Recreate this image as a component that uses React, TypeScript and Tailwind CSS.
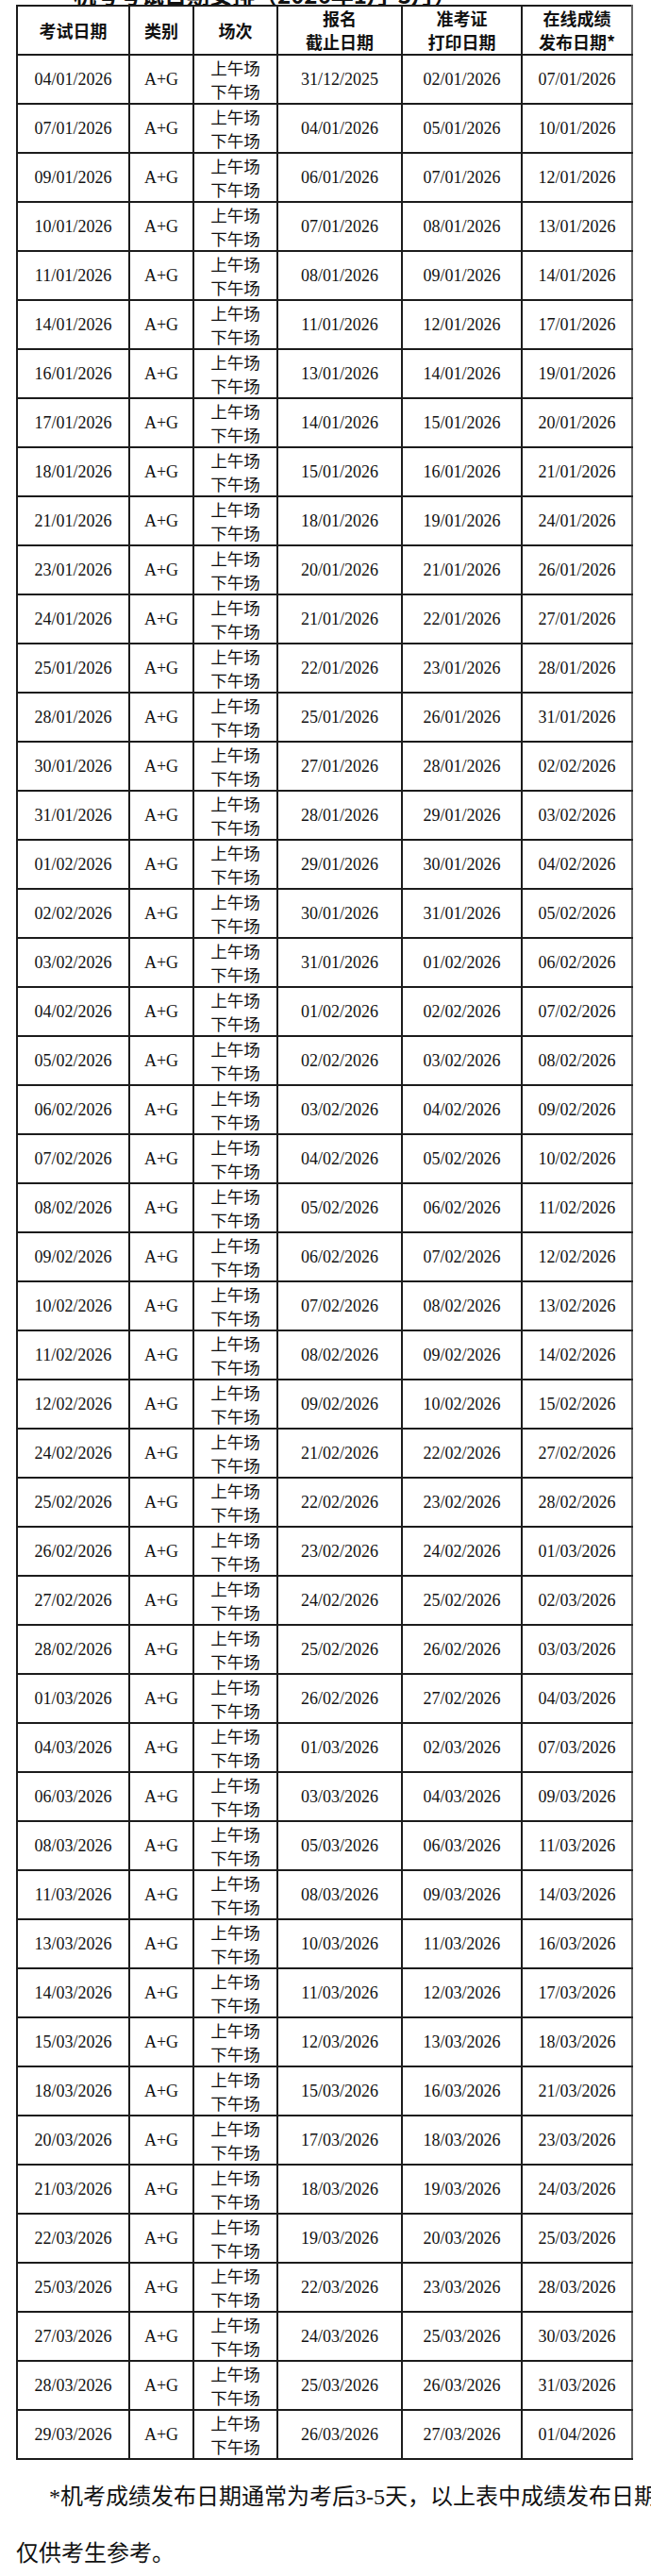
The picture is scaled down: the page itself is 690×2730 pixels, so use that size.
import React from "react";

// exam dates; deadline = -3 days, admission print = -2 days, results = +3 days
const examDates = [
  "04/01", "07/01", "09/01", "10/01", "11/01", "14/01", "16/01", "17/01", "18/01", "21/01",
  "23/01", "24/01", "25/01", "28/01", "30/01", "31/01", "01/02", "02/02", "03/02", "04/02",
  "05/02", "06/02", "07/02", "08/02", "09/02", "10/02", "11/02", "12/02", "24/02", "25/02",
  "26/02", "27/02", "28/02", "01/03", "04/03", "06/03", "08/03", "11/03", "13/03", "14/03",
  "15/03", "18/03", "20/03", "21/03", "22/03", "25/03", "27/03", "28/03", "29/03",
];

const pad = (n: number) => String(n).padStart(2, "0");

const shift = (dm: string, days: number) => {
  const [d, m] = dm.split("/").map(Number);
  const date = new Date(Date.UTC(2026, m - 1, d + days));
  return `${pad(date.getUTCDate())}/${pad(date.getUTCMonth() + 1)}/${date.getUTCFullYear()}`;
};

const rows = examDates.map((dm, i) => ({
  exam: shift(dm, 0),
  // first session closes over new year
  deadline: i === 0 ? "31/12/2025" : shift(dm, -3),
  print: shift(dm, -2),
  result: shift(dm, 3),
}));

const cell = "border-2 border-[#1c1c1c] text-center align-middle p-0";
const head = `${cell} font-bold font-['Noto_Sans_CJK_SC',sans-serif] text-[18px] leading-[25px]`;

export default function App() {
  return (
    <div className="w-[690px] min-h-[2730px] overflow-hidden bg-white text-[#111] font-['Liberation_Serif','Noto_Sans_CJK_SC',serif]">
      <div className="h-[5px] overflow-hidden relative">
        <div className="absolute left-[78px] bottom-[-4px] whitespace-nowrap font-bold text-[24px] leading-[30px] font-['Noto_Sans_CJK_SC',sans-serif]">
          机考考试日期安排（2026年1月-3月）
        </div>
      </div>

      <table className="ml-[17px] w-[652px] table-fixed border-collapse">
        <colgroup>
          <col className="w-[119px]" />
          <col className="w-[68px]" />
          <col className="w-[89px]" />
          <col className="w-[132px]" />
          <col className="w-[127px]" />
          <col className="w-[117px]" />
        </colgroup>
        <thead>
          <tr className="h-[51px]">
            <th className={head}>考试日期</th>
            <th className={head}>类别</th>
            <th className={head}>场次</th>
            <th className={head}>
              报名
              <br />
              截止日期
            </th>
            <th className={head}>
              准考证
              <br />
              打印日期
            </th>
            <th className={`${head} border-r-[#666]`}>
              在线成绩
              <br />
              发布日期*
            </th>
          </tr>
        </thead>
        <tbody>
          {rows.map((r) => (
            <tr key={r.exam} className="h-[51.33px] text-[18px]">
              <td className={cell}>{r.exam}</td>
              <td className={cell}>A+G</td>
              <td className={`${cell} leading-[25px] font-['Noto_Sans_CJK_SC',sans-serif] text-[17.5px]`}>
                上午场
                <br />
                下午场
              </td>
              <td className={cell}>{r.deadline}</td>
              <td className={cell}>{r.print}</td>
              <td className={`${cell} border-r-[#666]`}>{r.result}</td>
            </tr>
          ))}
        </tbody>
      </table>

      <p className="mt-[9px] pl-[17px] text-[24px] leading-[60px] whitespace-nowrap indent-[35px]">
        *机考成绩发布日期通常为考后3-5天，以上表中成绩发布日期
        <br />
        <span className="inline-block indent-0">仅供考生参考。</span>
      </p>
    </div>
  );
}
